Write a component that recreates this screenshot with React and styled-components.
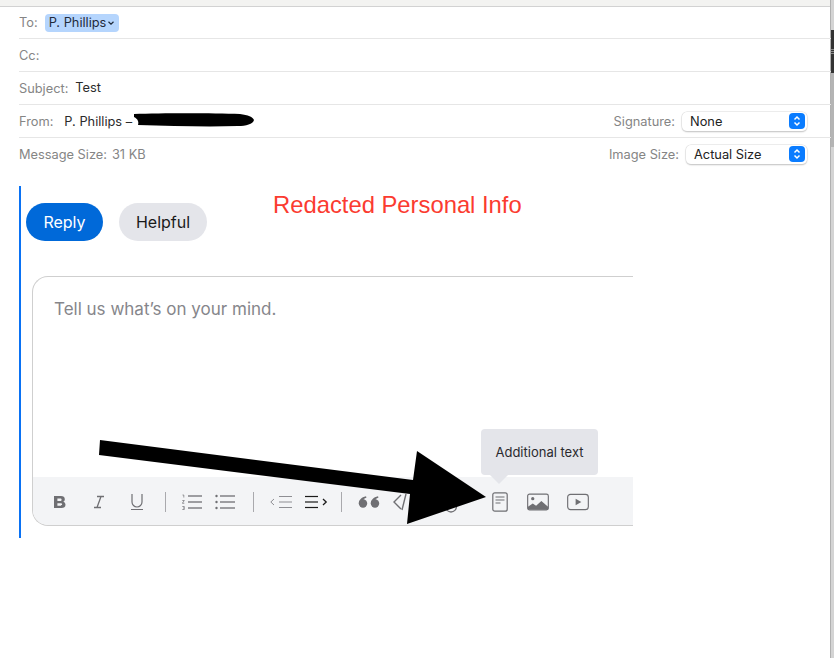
import styled, { createGlobalStyle } from 'styled-components';

const Global = createGlobalStyle`
html, body { margin: 0; padding: 0; background: #fff; }
body { font-family: Inter, "Liberation Sans", sans-serif; }
`;

const Page = styled.div`
position: relative;
width: 834px;
height: 658px;
overflow: hidden;
background: #fff;
`;

const TopStrip = styled.div`
height: 6px;
background: #f3f3f1;
border-bottom: 1px solid #d2d2d2;
`;

const EdgeStrip = styled.div`
position: absolute;
top: 0;
right: 0;
width: 3px;
height: 658px;
background: linear-gradient(
  #d4d4d4 0 30px,
  #333 30px 49px,
  #8a8a8a 49px 50px,
  #333 50px 51px,
  #8a8a8a 51px 52px,
  #333 52px 53px,
  #8a8a8a 53px 54px,
  #333 54px 73px,
  #b4b4b4 73px 147px,
  #d4d4d4 147px
);
border-left: 1px solid #b0b0b0;
`;

const Header = styled.div`
margin: 0 3px 0 19px;
`;

const Row = styled.div`
position: relative;
height: ${p => p.$h || 32}px;
display: flex;
align-items: center;
border-bottom: ${p => (p.$last ? 'none' : '1px solid #e6e6e6')};
font-size: 12.8px;
color: #2b2b2b;
`;

const Label = styled.span`
color: #858585;
margin-right: ${p => p.$gap || 6}px;
`;

const Value = styled.span`
position: relative;
top: -1px;
`;

const Muted = styled.span`
color: #858585;
`;

const Chip = styled.span`
display: flex;
align-items: center;
gap: 2px;
height: 18px;
padding: 0 5px 0 4px;
border-radius: 4px;
background: #b5d5fd;
color: #1f2a3a;
`;

const RightGroup = styled.div`
margin-left: auto;
margin-right: 24px;
display: flex;
align-items: center;
`;

const Select = styled.div`
width: ${p => p.$w}px;
height: 19px;
box-sizing: border-box;
display: flex;
align-items: center;
justify-content: space-between;
padding: 0 2px 0 8px;
border-radius: 5px;
background: #fff;
box-shadow: 0 0 0 0.5px #dcdcdc, 0 1px 1.5px rgba(0, 0, 0, 0.3);
color: #222;
`;

const Stepper = styled.span`
width: 16px;
height: 16px;
border-radius: 4px;
background: #0a7cff;
display: flex;
align-items: center;
justify-content: center;
`;

const Blob = styled.svg`
position: absolute;
left: 113px;
top: 6px;
`;

const Thread = styled.div`
margin: 16px 0 0 19px;
width: 614px;
height: 352px;
box-sizing: border-box;
border-left: 2px solid #0a72f4;
padding: 17px 0 0 5px;
`;

const Buttons = styled.div`
display: flex;
gap: 16px;
`;

const PillButton = styled.div`
height: 38px;
width: ${p => p.$w}px;
justify-content: center;
border-radius: 19px;
display: flex;
align-items: center;
font-size: 16px;
background: ${p => (p.$primary ? '#0069d9' : '#e4e5ea')};
color: ${p => (p.$primary ? '#fff' : '#1a1a1a')};
`;

const Composer = styled.div`
position: relative;
margin: 35px 0 0 6px;
height: 250px;
box-sizing: border-box;
display: flex;
flex-direction: column;
border: 1px solid #cfcfcf;
border-right: none;
border-radius: 16px 0 0 16px;
`;

const Placeholder = styled.div`
flex: 1;
padding: 22px 0 0 21px;
font-size: 17px;
color: #86868b;
`;

const Toolbar = styled.div`
height: 48px;
box-sizing: border-box;
display: flex;
align-items: center;
padding: 2px 0 0 17px;
background: #f3f4f6;
border-radius: 0 0 0 15px;
`;

const Tool = styled.span`
width: ${p => p.$w}px;
margin-left: ${p => p.$ml || 0}px;
display: flex;
justify-content: center;
color: ${p => p.$color || '#6f6f73'};
`;

const Sep = styled.span`
width: 1px;
height: 20px;
margin: 0 ${p => p.$r || 14}px 0 ${p => p.$l || 14}px;
background: #a9a9ad;
`;

const Tooltip = styled.div`
position: absolute;
left: 448px;
top: 152px;
width: 117px;
height: 46px;
display: flex;
align-items: center;
justify-content: center;
border-radius: 4px;
background: #e4e5ea;
font-size: 13px;
color: #2a2a2e;
&::after {
  content: "";
  position: absolute;
  left: 9px;
  top: 46px;
  border: 9px solid transparent;
  border-top-color: #e4e5ea;
  border-bottom: none;
}
`;

const Annotation = styled.div`
position: absolute;
left: 273px;
top: 191px;
font-family: "Liberation Sans", Arial, sans-serif;
font-size: 23.8px;
line-height: 28px;
color: #fb3b30;
`;

const ArrowMark = styled.svg`
position: absolute;
left: 0;
top: 0;
pointer-events: none;
`;

const LinkIcon = styled.svg`
transform: translateY(2px);
`;

const Chevrons = () => (
  <svg width="10" height="12" viewBox="0 0 10 12" fill="none" stroke="#fff" strokeWidth="1.5">
    <path d="M2.5 4.5 5 2 7.5 4.5M2.5 7.5 5 10 7.5 7.5" />
  </svg>
);

const Lines = ({ w = 18, x = 0, sw = 1.3, gaps = [3, 9, 15] }) => (
  <>
    {gaps.map(y => (
      <path key={y} d={`M${x} ${y}h${w}`} stroke="currentColor" strokeWidth={sw} fill="none" />
    ))}
  </>
);

const App = () => {
  return (
    <Page>
      <Global />
      <TopStrip />
      <EdgeStrip />
      <Header>
        <Row $h={31}>
          <Label $gap={7}>To:</Label>
          <Chip>
            P. Phillips
            <svg width="6" height="4" viewBox="0 0 6 4" fill="none" stroke="#1f2a3a" strokeWidth="1.2">
              <path d="M.5.8 3 3.2 5.5.8" />
            </svg>
          </Chip>
        </Row>
        <Row>
          <Label>Cc:</Label>
        </Row>
        <Row>
          <Label $gap={7}>Subject:</Label>
          <Value>Test</Value>
        </Row>
        <Row>
          <Label $gap={11}>From:</Label>
          P. Phillips –
          <Blob width="125" height="20" viewBox="0 0 125 20">
            <path d="M2 3C30 2 80 2 108 3c8 1 13 3 14 6-1 4-8 6-16 6C75 16 40 15 6 14 7 11 6 8 2 6Z" fill="#000" />
          </Blob>
          <RightGroup>
            <Label $gap={7}>Signature:</Label>
            <Select $w={125}>
              None
              <Stepper><Chevrons /></Stepper>
            </Select>
          </RightGroup>
        </Row>
        <Row $last>
          <Label $gap={5}>Message Size:</Label>
          <Muted>31 KB</Muted>
          <RightGroup>
            <Label $gap={7}>Image Size:</Label>
            <Select $w={121}>
              Actual Size
              <Stepper><Chevrons /></Stepper>
            </Select>
          </RightGroup>
        </Row>
      </Header>

      <Thread>
        <Buttons>
          <PillButton $primary $w={77}>Reply</PillButton>
          <PillButton $w={88}>Helpful</PillButton>
        </Buttons>
        <Composer>
          <Placeholder>Tell us what’s on your mind.</Placeholder>
          <Toolbar>
            <Tool $w={20}>
              <svg width="14" height="14" viewBox="0 0 14 14" fill="currentColor">
                <path fillRule="evenodd" d="M1 1h7c2.4 0 3.8 1.2 3.8 3.2 0 1.3-.7 2.2-1.8 2.6 1.5.3 2.5 1.4 2.5 3 0 2.2-1.6 3.2-4 3.2H1ZM4.4 3.4v2.6h2.8c.9 0 1.4-.5 1.4-1.3s-.5-1.3-1.4-1.3ZM4.4 8.2v2.500h3.2c1 0 1.5-.4 1.500-1.2s-.5-1.3-1.500-1.3Z" />
              </svg>
            </Tool>
            <Tool $w={20} $ml={19}>
              <svg width="14" height="14" viewBox="0 0 14 14" fill="none" stroke="currentColor" strokeWidth="1.3">
                <path d="M5 1.500h7M2 12.500h7M9 1.500 5 12.500" />
              </svg>
            </Tool>
            <Tool $w={20} $ml={18}>
              <svg width="14" height="18" viewBox="0 0 14 18" fill="none" stroke="currentColor" strokeWidth="1.2">
                <path d="M2 1v8a5 5 0 0 0 10 0V1M1 16.500h12" />
              </svg>
            </Tool>
            <Sep $l={18} $r={16} />
            <Tool $w={20}>
              <svg width="20" height="16" viewBox="0 0 20 16" fill="none">
                <Lines x={6} w={14} gaps={[2, 8, 14]} />
                <path d="M.5 1h1.300v2.500M.3 6.500h2L.3 9.300h2M.3 12.500h2v3H.3M1 14h1" stroke="currentColor" strokeWidth=".7" />
              </svg>
            </Tool>
            <Tool $w={20} $ml={13}>
              <svg width="20" height="16" viewBox="0 0 20 16" fill="none">
                <Lines x={5} w={15} gaps={[2, 8, 14]} />
                <circle cx="1.500" cy="2" r="1.200" fill="currentColor" />
                <circle cx="1.500" cy="8" r="1.200" fill="currentColor" />
                <circle cx="1.500" cy="14" r="1.200" fill="currentColor" />
              </svg>
            </Tool>
            <Sep $l={18} $r={15} />
            <Tool $w={24} $color="#8e8e93">
              <svg width="24" height="14" viewBox="0 0 24 14" fill="none">
                <Lines x={10} w={13} sw={1} gaps={[1.5, 7, 12.5]} />
                <path d="M5 4 1.800 7 5 10" stroke="currentColor" strokeWidth="1" />
              </svg>
            </Tool>
            <Tool $w={24} $ml={11} $color="#1b1b1b">
              <svg width="24" height="14" viewBox="0 0 24 14" fill="none">
                <Lines x={1} w={13} sw={1.2} gaps={[1.5, 7, 12.5]} />
                <path d="M19 4 22.200 7 19 10" stroke="currentColor" strokeWidth="1.3" />
              </svg>
            </Tool>
            <Sep $l={13} $r={16} />
            <Tool $w={22}>
              <svg width="22" height="12" viewBox="0 0 22 12" fill="currentColor">
                <circle cx="5" cy="7.500" r="4.200" />
                <path d="M.8 7.500C.8 4 3.500 1 8 .2L8.500 1.500C6.500 2.300 5.500 3.300 5 4.500Z" />
                <circle cx="17" cy="7.500" r="4.200" />
                <path d="M12.800 7.500C12.800 4 15.500 1 20 .2L20.500 1.500C18.500 2.300 17.500 3.300 17 4.500Z" />
              </svg>
            </Tool>
            <Tool $w={22} $ml={10}>
              <svg width="18" height="18" viewBox="0 0 18 18" fill="none" stroke="currentColor" strokeWidth="1.4">
                <path d="M9 2 2 9l7 7M14 1 10 17" />
              </svg>
            </Tool>
            <Tool $w={20} $ml={29}>
              <LinkIcon width="14" height="18" viewBox="0 0 14 18" fill="none" stroke="currentColor" strokeWidth="1.3">
                <path d="M12.500 3.500v8a5.500 5.500 0 0 1-11 0v-6" />
              </LinkIcon>
            </Tool>
            <Tool $w={18} $ml={30}>
              <svg width="16" height="20" viewBox="0 0 16 20" fill="none" stroke="currentColor" strokeWidth="1.2">
                <rect x=".8" y=".8" width="14.400" height="18.400" rx="2" />
                <path d="M3.500 5h9M3.500 8h9M3.500 11h5" />
              </svg>
            </Tool>
            <Tool $w={22} $ml={18}>
              <svg width="23" height="18" viewBox="0 0 23 18" fill="none" stroke="currentColor" strokeWidth="1.2">
                <rect x=".7" y=".7" width="21.600" height="16.600" rx="2" />
                <circle cx="6" cy="5.500" r="1.700" fill="currentColor" stroke="none" />
                <path d="M1 16.800V14l5-3.500 3.500 2.500L15 8l7 6v3Z" fill="currentColor" stroke="none" />
              </svg>
            </Tool>
            <Tool $w={22} $ml={18}>
              <svg width="23" height="18" viewBox="0 0 23 18" fill="none" stroke="currentColor" strokeWidth="1.2">
                <rect x=".7" y="1" width="21.600" height="16" rx="3" />
                <path d="M9 5.500v7l6-3.500Z" fill="currentColor" stroke="none" />
              </svg>
            </Tool>
          </Toolbar>
          <Tooltip>Additional text</Tooltip>
        </Composer>
      </Thread>

      <Annotation>Redacted Personal Info</Annotation>
      <ArrowMark width="834" height="658" viewBox="0 0 834 658">
        <path d="M100 440 413 480 417 451 486 497 407 524 410 494 99 455Z" fill="#000" />
      </ArrowMark>
    </Page>
  );
};

export default App;
